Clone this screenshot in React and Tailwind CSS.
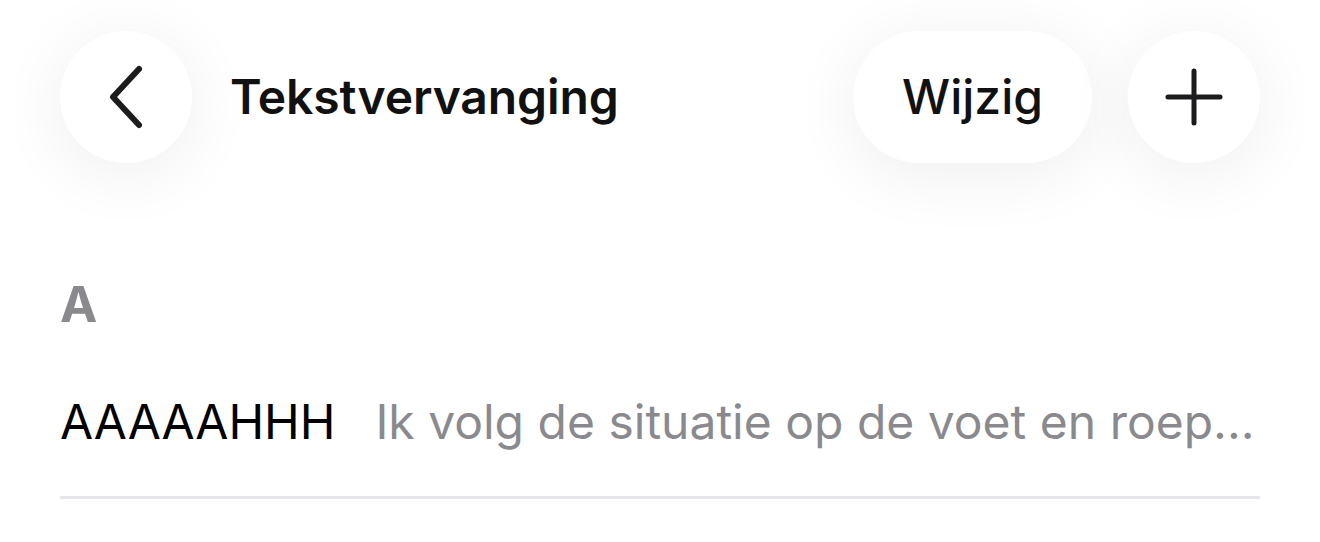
import React from 'react';

const font = { fontFamily: 'Inter, "Noto Sans", sans-serif' };

const entries = [
  { shortcut: 'AAAAAHHH', phrase: 'Ik volg de situatie op de voet en roep...' },
];

function RoundButton({ children, className = '' }) {
  return (
    <button className={`h-[132px] rounded-full bg-white flex items-center justify-center shadow-[0_10px_70px_rgba(0,0,0,0.07)] ${className}`}>
      {children}
    </button>
  );
}

export default function App() {
  return (
    <div className="w-[1320px] h-[542px] bg-white overflow-hidden text-[#111]" style={font}>
      {/* top bar */}
      <div className="flex items-center px-[60px] pt-[31px]">
        <RoundButton className="w-[132px]">
          <svg width="36" height="64" viewBox="0 0 36 64" fill="none" stroke="#1c1c1e" strokeWidth="6" strokeLinecap="round" strokeLinejoin="round">
            <path d="M31 4 L5 32 L31 60" />
          </svg>
        </RoundButton>
        <h1 className="ml-[38px] text-[48px] font-semibold tracking-[-0.1px]">Tekstvervanging</h1>
        <div className="ml-auto flex items-center gap-[36px]">
          <RoundButton className="w-[239px] text-[48px] font-medium">Wijzig</RoundButton>
          <RoundButton className="w-[132px]">
            <svg width="58" height="58" viewBox="0 0 58 58" fill="none" stroke="#1c1c1e" strokeWidth="5" strokeLinecap="round">
              <path d="M29 3 V55 M3 29 H55" />
            </svg>
          </RoundButton>
        </div>
      </div>

      {/* list */}
      <div className="px-[60px] mt-[116px]">
        <div className="text-[50px] leading-none font-bold text-[#8a8a8e]">A</div>
        <div className="flex items-baseline gap-[40px] mt-[57px] pb-[38px] border-b-[3px] border-[#e5e5ea] whitespace-nowrap">
          {entries.map((e) => (
            <React.Fragment key={e.shortcut}>
              <span className="text-[48px] leading-normal text-black">{e.shortcut}</span>
              <span className="text-[48px] leading-normal text-[#8a8a8e]">{e.phrase}</span>
            </React.Fragment>
          ))}
        </div>
      </div>
    </div>
  );
}
